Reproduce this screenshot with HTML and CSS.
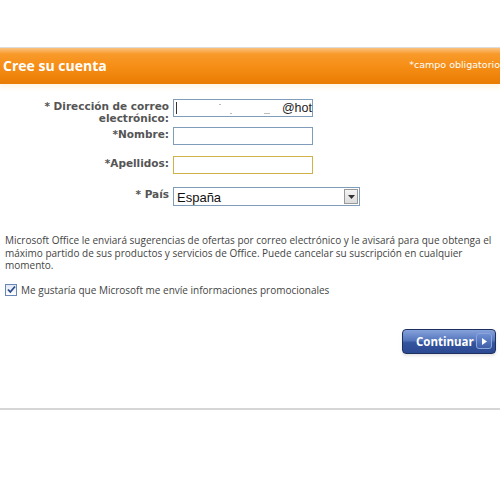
FILE: index.html
```html
<!DOCTYPE html>
<html lang="es">
<head>
  <meta charset="UTF-8" />
  <title>Cree su cuenta</title>
  <link rel="stylesheet" href="styles.css">
</head>
<body>
  <div class="page">
    <div class="header">
      <div class="header-title">Cree su cuenta</div>
      <div class="header-note">*campo obligatorio</div>
    </div>

    <form class="fields">
      <div class="field-row row-email">
        <label class="field-label">* Dirección de correo electrónico:</label>
        <div class="fake-input email-input">
          <span class="caret"></span>
          <span class="speck s1"></span>
          <span class="speck s2"></span>
          <span class="speck s3"></span>
          <span class="email-domain">@hot</span>
        </div>
      </div>

      <div class="field-row row-name">
        <label class="field-label">*Nombre:</label>
        <div class="fake-input"></div>
      </div>

      <div class="field-row row-surname">
        <label class="field-label">*Apellidos:</label>
        <div class="fake-input is-focused"></div>
      </div>

      <div class="field-row">
        <label class="field-label">* País</label>
        <div class="fake-select">
          <span class="select-value">España</span>
          <span class="select-arrow">
            <svg width="7" height="4" viewBox="0 0 7 4"><path d="M0 0h7L3.5 4z" fill="#333"/></svg>
          </span>
        </div>
      </div>
    </form>

    <p class="notice">Microsoft Office le enviará sugerencias de ofertas por correo electrónico y le avisará para que obtenga el máximo partido de sus productos y servicios de Office. Puede cancelar su suscripción en cualquier momento.</p>

    <div class="optin">
      <span class="checkbox">
        <svg width="9" height="9" viewBox="0 0 9 9"><path d="M1 4.5l2.3 2.5L8 1.5" fill="none" stroke="#2d4a8a" stroke-width="1.8"/></svg>
      </span>
      <span>Me gustaría que Microsoft me envíe informaciones promocionales</span>
    </div>

    <div class="actions">
      <button type="button" class="btn-continue">
        <span>Continuar</span>
        <span class="btn-arrow">
          <svg width="5" height="7" viewBox="0 0 5 7"><path d="M0 0l5 3.5L0 7z" fill="#fff"/></svg>
        </span>
      </button>
    </div>

    <div class="footer-line"></div>
  </div>
</body>
</html>
```

FILE: styles.css
```css
* {
  box-sizing: border-box;
}

body {
  margin: 0;
  background: #fff;
  color: #333;
  font-family: "DejaVu Sans", Verdana, sans-serif;
  overflow: hidden;
}

.page {
  padding-top: 47px;
}

/* Orange title bar */
.header {
  border-top: 1px solid #dcdcdc;
  height: 37px;
  background: linear-gradient(#fbc27f 0, #f89a2a 6px, #f68e16 50%, #e97c02 100%);
  display: flex;
  align-items: center;
  justify-content: space-between;
  padding-left: 3px;
  white-space: nowrap;
  box-shadow: 0 4px 4px #fff6e6;
}

.header-title {
  color: #fff;
  font-family: "Open Sans", "Noto Sans", sans-serif;
  font-weight: bold;
  font-size: 14px;
  margin-top: -1px;
}

.header-note {
  color: #fff;
  font-size: 9.5px;
  margin-top: -4px;
}

/* Form rows */
.fields {
  margin: 15px 0 0;
}

.field-row {
  display: flex;
  align-items: flex-start;
  gap: 4px;
  margin-bottom: 13px;
}

.row-email {
  margin-bottom: 3px;
}

.row-name {
  margin-bottom: 11px;
}

.field-label {
  width: 169px;
  text-align: right;
  font-weight: bold;
  font-size: 10.5px;
  line-height: 12px;
  color: #555;
  padding-top: 1px;
  padding-left: 38px;
}

.fake-input {
  width: 140px;
  height: 18px;
  border: 1px solid #7f9db9;
  background: #fff;
}

.fake-input.is-focused {
  border-color: #d3b14a;
}

.email-input {
  position: relative;
  font-family: "Liberation Sans", Arial, sans-serif;
  font-size: 12.5px;
  color: #222;
}

.caret {
  position: absolute;
  left: 2px;
  top: 2px;
  width: 1px;
  height: 12px;
  background: #333;
}

.speck {
  position: absolute;
  width: 2px;
  height: 1px;
  background: #bbb;
}
.s1 { left: 45px; top: 4px; }
.s2 { left: 56px; top: 13px; }
.s3 { left: 90px; top: 13px; width: 6px; }

.email-domain {
  position: absolute;
  right: 0;
  top: 1px;
}

.fake-select {
  width: 187px;
  height: 19px;
  border: 1px solid #7f9db9;
  display: flex;
  align-items: center;
  justify-content: space-between;
  font-family: "Liberation Sans", Arial, sans-serif;
  font-size: 13px;
  color: #111;
  padding-left: 3px;
}

.select-value {
  margin-top: 2px;
}

.select-arrow {
  width: 14px;
  height: 15px;
  margin-right: 1px;
  border: 1px solid #999;
  background: linear-gradient(#f4f4f4, #dcdcdc);
  display: flex;
  align-items: center;
  justify-content: center;
}

/* Notice text */
.notice {
  margin: 28px 0 0 5px;
  font-family: "Open Sans", "Noto Sans", sans-serif;
  font-size: 10px;
  line-height: 12.5px;
  color: #444;
  padding-right: 2px;
}

.optin {
  display: flex;
  align-items: center;
  gap: 4px;
  margin: 11px 0 0 5px;
  font-family: "Open Sans", "Noto Sans", sans-serif;
  font-size: 10px;
  color: #444;
}

.checkbox {
  width: 12px;
  height: 12px;
  border: 1px solid #6a86b5;
  background: linear-gradient(#dfe8f5, #fff);
  display: flex;
  align-items: center;
  justify-content: center;
}

/* Continue button */
.actions {
  display: flex;
  justify-content: flex-end;
  padding-right: 4px;
  margin-top: 32px;
}

.btn-continue {
  width: 94px;
  height: 25px;
  border: 1px solid #1d3060;
  border-radius: 4px;
  background: linear-gradient(#86a2dc 0, #5676bd 45%, #34549e 55%, #2c4a92 100%);
  display: flex;
  align-items: center;
  justify-content: space-between;
  padding: 0 3px 0 13px;
  color: #fff;
  font-family: "Open Sans", "Noto Sans", sans-serif;
  font-weight: bold;
  font-size: 11.5px;
  box-shadow: 0 2px 3px #e6e6e6;
}

.btn-arrow {
  width: 16px;
  height: 16px;
  border-radius: 3px;
  border: 1px solid #8aa4dd;
  background: linear-gradient(#6f8fd4, #3d5ea8);
  display: flex;
  align-items: center;
  justify-content: center;
}

.footer-line {
  margin-top: 54px;
  border-top: 2px solid #d6d6d6;
}
```
